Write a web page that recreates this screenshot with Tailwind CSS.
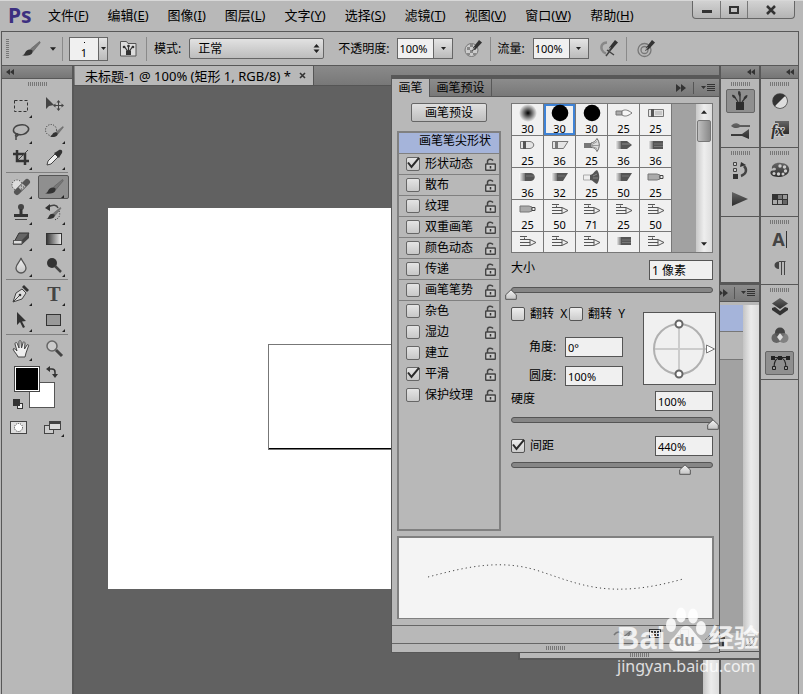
<!DOCTYPE html>
<html lang="zh-CN">
<head>
  <meta charset="UTF-8" />
  <meta name="viewport" content="width=device-width, initial-scale=1.0"/>
  <title>未标题-1</title>
  <script src="https://cdn.jsdelivr.net/npm/@tailwindcss/browser@4"></script>
</head>
<body class="relative h-screen overflow-hidden flex flex-col bg-[#b8b8b8] text-black text-[12px] leading-4 font-['Noto_Sans','Noto_Sans_CJK_SC',sans-serif]">

  <!-- Shared icons -->
  <svg class="absolute w-0 h-0" aria-hidden="true">
    <defs>
      <linearGradient id="dark" x1="0" y1="0" x2="0" y2="1"><stop offset="0" stop-color="#666"/><stop offset="1" stop-color="#2c2c2c"/></linearGradient>
      <linearGradient id="light" x1="0" y1="0" x2="0" y2="1"><stop offset="0" stop-color="#f4f4f4"/><stop offset="1" stop-color="#c4c4c4"/></linearGradient>
      <linearGradient id="fade"><stop offset="0" stop-color="#333"/><stop offset="1" stop-color="#eee"/></linearGradient>
      <linearGradient id="ferrule"><stop offset="0" stop-color="#fff"/><stop offset="1" stop-color="#777"/></linearGradient>
      <radialGradient id="soft"><stop offset="0" stop-color="#000"/><stop offset=".5" stop-color="#000" stop-opacity=".5"/><stop offset="1" stop-color="#000" stop-opacity="0"/></radialGradient>
    </defs>
    <symbol id="i-down" viewBox="0 0 7 4"><path d="M0 0h7L3.500 4z" fill="#222"/></symbol>
    <symbol id="i-left" viewBox="0 0 8 6"><path d="M4 0v6L0 3zM8 0v6L4 3z" fill="#333"/></symbol>
    <symbol id="i-right" viewBox="0 0 10 8"><path d="M0 0v8l5-4zM5 0v8l5-4z" fill="#333"/></symbol>
    <symbol id="i-menu" viewBox="0 0 14 8"><path d="M0 2h5L2.500 5z" fill="#333"/><path d="M6 .5h8M6 2.500h8M6 4.500h8M6 6.500h8" stroke="#333"/></symbol>
    <symbol id="i-brush" viewBox="0 0 20 16"><path d="M18.500.5c.8.6.8 1 .3 1.800L12 10.500 9.500 8z" fill="#777" stroke="#555" stroke-width=".5"/><path d="M9.500 8.500c2 .3 2.600 1.500 2 3-1 2.800-5 3.500-10.500 3 2-.5 2.500-1.500 3.500-3.500 1-1.800 3-3 5-2.500z" fill="#333"/></symbol>
    <symbol id="i-pen" viewBox="0 0 11 12"><path d="M8 0l3 2.500L5 9 1 11l1.500-4z" fill="#333"/><path d="M3.500 7.500L1.500 10" stroke="#ddd" stroke-width=".7"/></symbol>
    <symbol id="i-lock" viewBox="0 0 11 13"><path d="M2.500 6V3.500C2.500 1 6.500.5 8 2.500" fill="none" stroke="#444" stroke-width="1.500"/><rect x=".7" y="6" width="9.600" height="6.300" rx=".5" fill="#c8c8c8" stroke="#444" stroke-width="1.400"/><path d="M5.500 8v2.500" stroke="#333" stroke-width="1.500"/></symbol>
    <symbol id="i-tick" viewBox="0 0 14 13"><path d="M2 5.500l3.500 4.500L13 .8" fill="none" stroke="#2a2a2a" stroke-width="2"/></symbol>
    <symbol id="i-thumb" viewBox="0 0 12 11"><path d="M6 .8l5.300 5v4.500H.7V5.800z" fill="url(#light)" stroke="#555"/></symbol>
    <symbol id="i-corner" viewBox="0 0 3 3"><path d="M3 0v3H0z" fill="#222"/></symbol>
    <symbol id="i-grip" viewBox="0 0 19 4"><path d="M.5 0v4M2.500 0v4M4.500 0v4M6.500 0v4M8.500 0v4M10.500 0v4M12.500 0v4M14.500 0v4M16.500 0v4M18.500 0v4" stroke="#777"/></symbol>
    <!-- Brush tips -->
    <symbol id="b-soft" viewBox="0 0 18 18"><circle cx="9" cy="9" r="9" fill="url(#soft)"/></symbol>
    <symbol id="b-hard" viewBox="0 0 18 18"><circle cx="9" cy="9" r="8.300"/></symbol>
    <symbol id="b-point" viewBox="0 0 18 18"><path d="M1 7h6v4H1z" fill="#aaa" stroke="#777"/><path d="M7 7c3-2 6-1 10 2-4 3-7 4-10 2z" fill="#f5f5f5" stroke="#777"/></symbol>
    <symbol id="b-flat" viewBox="0 0 18 18"><path d="M1.500 5.500h15v7h-15z" fill="#e4e4e4" stroke="#777"/><path d="M4 5h3v8H4z" fill="#555"/><path d="M8 8h7M8 10h7" stroke="#aaa"/></symbol>
    <symbol id="b-round" viewBox="0 0 18 18"><path d="M1.500 5.500H11c5 1 5 6 0 7H1.500z" fill="#e4e4e4" stroke="#777"/><path d="M4 5h3v8H4z" fill="#555"/></symbol>
    <symbol id="b-slant" viewBox="0 0 18 18"><path d="M1.500 5.500H17l-4.500 7h-11z" fill="#e4e4e4" stroke="#777"/><path d="M4 5h3v8H4z" fill="#777"/></symbol>
    <symbol id="b-fan" viewBox="0 0 18 18"><path d="M1 7h7v5H1z" fill="#777"/><path d="M8 7c4-1 5-3 6-4.500 3 4 3 9 0 13-1-2-2-4-6-4z" fill="#ddd" stroke="#666"/><path d="M9 8.500l5-3M9 9.500h7M9 10.500l5 2" stroke="#999"/></symbol>
    <symbol id="b-point-d" viewBox="0 0 18 18"><path d="M0 5h6v8H0z" fill="url(#ferrule)"/><path d="M6 5h6l5 4-5 4H6z" fill="#555"/><path d="M7 8h8" stroke="#888"/></symbol>
    <symbol id="b-flat-d" viewBox="0 0 18 18"><path d="M1 5h5v8H1z" fill="url(#ferrule)"/><path d="M6 5h10v8H6z" fill="#555"/><path d="M7 8h9M7 10.500h9" stroke="#777"/></symbol>
    <symbol id="b-round-d" viewBox="0 0 18 18"><path d="M0 5h6v8H0z" fill="url(#ferrule)"/><path d="M6 5h6c5 1 5 7 0 8H6z" fill="#555"/><path d="M7 8h8" stroke="#777"/></symbol>
    <symbol id="b-slant-d" viewBox="0 0 18 18"><path d="M0 5h6v8H0z" fill="url(#ferrule)"/><path d="M6 5h11l-5 8H6z" fill="#555"/><path d="M7 8h7" stroke="#777"/></symbol>
    <symbol id="b-fan-d" viewBox="0 0 18 18"><path d="M.5 7h7v5h-7z" fill="#eee" stroke="#aaa"/><path d="M7 7c3 0 4-4 7-5 3 4 3 10 0 14-3-1-4-4-7-4z" fill="#555"/><path d="M10 8l4-2M10 10h5" stroke="#888"/></symbol>
    <symbol id="b-marker" viewBox="0 0 18 18"><path d="M1 6h9l3 1v4l-3 1H1z" fill="#aaa" stroke="#777"/><path d="M13 7.500h3v3h-3z" fill="#eee" stroke="#444"/></symbol>
    <symbol id="b-air" viewBox="0 0 18 18"><path d="M1 7.500h10l6 3-6 3H1M11 8v5M1 10.500h10M5.500 7V5.500M1 4.500h7" fill="none" stroke="#555"/></symbol>
  </svg>

  <!-- Title and menu bar -->
  <header class="h-[31px] shrink-0 flex items-start justify-between px-2 border-t border-[#d8d8d8]">
    <div class="flex items-center h-[28px]">
      <span class="w-10 text-[21px] leading-6 font-bold text-[#3c2f80]">Ps</span>
      <nav class="flex gap-[19px] text-[13px] leading-5 whitespace-nowrap">
        <button>文件(<u>F</u>)</button>
        <button>编辑(<u>E</u>)</button>
        <button>图像(<u>I</u>)</button>
        <button>图层(<u>L</u>)</button>
        <button>文字(<u>Y</u>)</button>
        <button>选择(<u>S</u>)</button>
        <button>滤镜(<u>T</u>)</button>
        <button>视图(<u>V</u>)</button>
        <button>窗口(<u>W</u>)</button>
        <button>帮助(<u>H</u>)</button>
      </nav>
    </div>
    <div class="flex h-[18px] border border-t-0 border-[#666] rounded-b bg-linear-to-b from-[#d2d2d2] to-[#b4b4b4]">
      <button aria-label="最小化" class="w-[28px] flex justify-center items-center border-r border-[#777]"><svg class="w-3 h-3"><rect x="1" y="6" width="10" height="3" fill="#333"/></svg></button>
      <button aria-label="最大化" class="w-[27px] flex justify-center items-center border-r border-[#777]"><svg class="w-3 h-3"><rect x="2" y="3" width="8" height="6" fill="none" stroke="#333" stroke-width="2"/></svg></button>
      <button aria-label="关闭" class="w-[46px] flex justify-center items-center"><svg class="w-3 h-3"><path d="M2 2l8 8M10 2l-8 8" stroke="#333" stroke-width="2.500"/></svg></button>
    </div>
  </header>

  <!-- Options bar -->
  <section class="h-[35px] shrink-0 ml-px mr-1 flex items-center border border-[#585858] pl-1 whitespace-nowrap">
    <svg class="w-[3px] h-5 mr-3"><path d="M0 .5h3M0 2.500h3M0 4.500h3M0 6.500h3M0 8.500h3M0 10.500h3M0 12.500h3M0 14.500h3M0 16.500h3M0 18.500h3" stroke="#777"/></svg>
    <button aria-label="画笔工具" class="flex items-center gap-[9px]">
      <svg class="w-5 h-4"><use href="#i-brush"/></svg>
      <svg class="w-[6px] h-1"><use href="#i-down"/></svg>
    </button>
    <div class="w-px h-6 bg-[#8a8a8a] mx-[6px]"></div>
    <button aria-label="画笔大小" class="flex w-[39px] h-6 border border-[#666] text-[11px]">
      <span class="w-7 shrink-0 bg-[#f0f0f0] h-full flex flex-col items-center justify-between pt-1"><i class="block size-px bg-black"></i><span class="leading-3 pb-px">1</span></span>
      <span class="flex-1 h-full border-l border-[#666] bg-linear-to-b from-[#e4e4e4] to-[#bbb] flex items-center justify-center"><svg class="w-[5px] h-[3px]"><use href="#i-down"/></svg></span>
    </button>
    <button aria-label="切换画笔面板" class="mx-3">
      <svg class="w-[17px] h-[17px]"><path d="M.5 1.500h6l1.500 2h8v12.500H.5z" fill="#ddd" stroke="#555"/><path d="M6 10.500h5V15H6z" fill="#333"/><path d="M8.500 11V5M7.500 11L4 6M9.500 11L13 6" stroke="#333" stroke-width="1.200"/><circle cx="4" cy="7" r="1.300" fill="#333"/><circle cx="13" cy="7" r="1.300" fill="#333"/><circle cx="8.500" cy="6" r="1.300" fill="#333"/></svg>
    </button>
    <div class="w-px h-6 bg-[#8a8a8a] -ml-[3px] mr-[7px]"></div>
    <label for="mode">模式:</label>
    <div class="relative ml-2 mr-[14px]">
      <select id="mode" class="block appearance-none w-[135px] h-[21px] pl-2 border border-[#666] rounded-[2px] bg-linear-to-b from-[#e2e2e2] to-[#bdbdbd] text-[12px] leading-4"><option>正常</option></select>
      <svg class="absolute right-1 top-[6px] w-[7px] h-[9px] pointer-events-none"><path d="M.5 3.500h6L3.500 0zM.5 5.500h6L3.500 9z" fill="#222"/></svg>
    </div>
    <label for="opacity">不透明度:</label>
    <div class="flex h-[21px] ml-2 border border-[#666]">
      <input id="opacity" value="100%" class="w-[35px] px-px bg-[#f0f0f0] text-[11px]"/>
      <button aria-label="不透明度选项" class="w-[19px] border-l border-[#666] bg-linear-to-b from-[#e4e4e4] to-[#bbb] flex items-center justify-center"><svg class="w-[5px] h-[3px]"><use href="#i-down"/></svg></button>
    </div>
    <button aria-label="不透明度压力" class="ml-[11px]">
      <svg class="w-[18px] h-[18px]"><circle cx="7.500" cy="10" r="6.500" fill="#ccc" stroke="#777"/><path d="M3 7h3v3H3zM6 4h3v3H6zM9 7h3v3H9zM6 10h3v3H6zM3 13h3v2H3zM9 13h3v2H9z" fill="#888"/><use href="#i-pen" x="7" y="0" width="11" height="12"/></svg>
    </button>
    <div class="w-px h-6 bg-[#8a8a8a] ml-2 mr-[6px]"></div>
    <label for="flow">流量:</label>
    <div class="flex h-[21px] ml-2 border border-[#666]">
      <input id="flow" value="100%" class="w-[35px] px-px bg-[#f0f0f0] text-[11px]"/>
      <button aria-label="流量选项" class="w-[19px] border-l border-[#666] bg-linear-to-b from-[#e4e4e4] to-[#bbb] flex items-center justify-center"><svg class="w-[5px] h-[3px]"><use href="#i-down"/></svg></button>
    </div>
    <button aria-label="喷枪" class="ml-[11px]">
      <svg class="w-[18px] h-[18px]"><path d="M7 2.500c-5 0-6.500 4-5 7.500 1 2 2 3 4 3.500" fill="none" stroke="#888" stroke-width="2.500"/><path d="M6 16l9-12M7 10l7 5" stroke="#444" stroke-width="1.500"/><use href="#i-pen" x="7" y="0" width="11" height="12"/></svg>
    </button>
    <div class="w-px h-6 bg-[#8a8a8a] ml-2 mr-[10px]"></div>
    <button aria-label="大小压力">
      <svg class="w-[18px] h-[18px]"><circle cx="7.500" cy="10" r="6.500" fill="none" stroke="#777" stroke-width="1.300"/><circle cx="7.500" cy="10" r="3.500" fill="none" stroke="#777" stroke-width="1.300"/><use href="#i-pen" x="7" y="0" width="11" height="12"/></svg>
    </button>
  </section>

  <main class="flex-1 min-h-0 ml-px mr-1 flex border-x border-[#585858]">
    <!-- Toolbox -->
    <aside class="w-[72px] shrink-0 border-r-2 border-[#585858]">
      <div class="h-[13px] flex items-center pl-1 border-b border-[#585858] bg-linear-to-b from-[#8c8c8c] to-[#767676]"><svg class="w-2 h-[6px]"><use href="#i-left"/></svg></div>
      <svg class="w-[19px] h-1 mt-[3px] mx-auto"><use href="#i-grip"/></svg>
      <div id="tools" class="px-[3px] pt-2"></div>

      <!-- Colour swatches -->
      <div class="relative h-[46px] mt-[5px] mx-3">
        <button aria-label="背景色" class="absolute left-[15px] top-4 size-[26px] bg-white border border-[#555]"></button>
        <button aria-label="前景色" class="absolute left-0 top-0 size-[26px] bg-black border border-[#444] ring-1 ring-inset ring-white"></button>
        <button aria-label="切换颜色" class="absolute left-8 top-0"><svg class="w-3 h-3"><path d="M3 3h3c2 0 3 1 3 3v3" fill="none" stroke="#333" stroke-width="1.500"/><path d="M0 3l4-3v6zM6 8h6l-3 4z" fill="#333"/></svg></button>
        <button aria-label="默认颜色" class="absolute -left-[1px] top-[33px]"><svg class="w-[11px] h-[11px]"><rect x="4.500" y="4.500" width="5" height="5" fill="#eee" stroke="#333"/><rect width="7" height="7" fill="#333"/></svg></button>
      </div>
      <div class="flex justify-between items-center px-2 pt-[7px]">
        <button aria-label="快速蒙版"><svg class="w-[18px] h-[14px]"><rect x=".5" y=".5" width="16" height="12" fill="#ddd" stroke="#444"/><circle cx="8.500" cy="6.500" r="4" fill="#fff" stroke="#333" stroke-dasharray="1 1"/></svg></button>
        <button aria-label="屏幕模式"><svg class="w-5 h-[18px]"><rect x=".5" y="6.500" width="9" height="8" fill="#ccc" stroke="#444"/><rect x="5.500" y="2.500" width="11" height="8" fill="#ddd" stroke="#444"/><path d="M5 4h12" stroke="#444" stroke-width="2"/><path d="M20 15v3h-3z" fill="#222"/></svg></button>
      </div>
    </aside>

    <!-- Document -->
    <section class="flex-1 min-w-0 flex flex-col bg-[#616161] border-r-2 border-[#585858]">
      <div class="h-[20px] shrink-0 border-b border-[#555] bg-linear-to-b from-[#8a8a8a] to-[#787878] flex pl-px">
        <div class="flex items-center justify-between w-[239px] pl-[10px] pr-[7px] bg-[#b8b8b8] border-r border-[#555] whitespace-nowrap">
          <span class="text-[13px] leading-5">未标题-1 @ 100% (矩形 1, RGB/8) *</span>
          <button aria-label="关闭文档"><svg class="w-[7px] h-[7px]"><path d="M1 1l5 5M6 1L1 6" stroke="#333" stroke-width="1.600"/></svg></button>
        </div>
      </div>
      <div class="flex-1 min-h-0 flex justify-between overflow-hidden">
        <div class="w-[500px] h-[381px] ml-[34px] mt-[122px] pl-40 pt-[136px] bg-white">
          <div class="w-[200px] h-[106px] border border-[#777]">
            <div class="h-full border-b border-black"></div>
          </div>
        </div>
        <div class="w-4 bg-linear-to-r from-[#c4c4c4] via-[#ececec] to-[#dcdcdc]"></div>
      </div>
    </section>

    <!-- Collapsed panels -->
    <aside class="w-[40px] shrink-0 border-r-2 border-[#585858]">
      <div class="h-[13px] flex items-center justify-end pr-1 border-b border-[#585858] bg-linear-to-b from-[#8c8c8c] to-[#767676]"><svg class="w-2 h-[6px]"><use href="#i-left"/></svg></div>
      <div class="flex flex-col items-center pt-[3px] pb-[5px] border-b border-[#585858]">
        <svg class="w-[19px] h-1 mb-[3px]"><use href="#i-grip"/></svg>
        <button aria-label="画笔" class="w-[29px] h-6 mb-[5px] flex items-center justify-center rounded-[2px] border border-[#666] bg-[#8f8f8f]"><svg class="w-4 h-5"><path d="M4 11h8v8H4z" fill="#2c2c2c"/><path d="M6 11L2 5M8 11V3M10 11l4-5" stroke="#333" stroke-width="1.300"/><path d="M0 4c1-1 3 0 4 3-2 1-4-1-4-3zM6.500 0c2 0 3 2 1.500 6-2-2-2.500-4-1.500-6zM15.500 4c0 3-2 4-4 4 0-2 2-4 4-4z" fill="#333"/></svg></button>
        <button aria-label="画笔预设" class="w-[29px] h-6 flex items-center justify-center"><svg class="w-[19px] h-[17px]"><path d="M0 4c2-3 6-4 9-1h10v2H9C6 7 2 6 0 4zM0 12h11l7-5v10l-7-3H0z" fill="url(#dark)"/></svg></button>
      </div>
      <div class="flex flex-col items-center pt-[3px] pb-[5px] border-b border-[#585858]">
        <svg class="w-[19px] h-1 mb-[3px]"><use href="#i-grip"/></svg>
        <button aria-label="历史记录" class="w-[29px] h-6 mb-[5px] flex items-center justify-center"><svg class="w-4 h-[18px]"><path d="M1.500 1.500h3v3h-3zM1.500 7.500h3v3h-3z" fill="#ccc" stroke="#444"/><path d="M1 13h5v5H1z" fill="#333"/><path d="M9 15c6-2 6-7 3-10" fill="none" stroke="#444" stroke-width="2.500"/><path d="M8 6l1-5 5 3z" fill="#333"/></svg></button>
        <button aria-label="动作" class="w-[29px] h-6 flex items-center justify-center"><svg class="w-4 h-[14px]"><path d="M0 0l16 7-16 7z" fill="url(#dark)"/></svg></button>
      </div>
    </aside>
    <aside class="w-[37px] shrink-0">
      <div class="h-[13px] flex items-center justify-end pr-1 border-b border-[#585858] bg-linear-to-b from-[#8c8c8c] to-[#767676]"><svg class="w-2 h-[6px]"><use href="#i-left"/></svg></div>
      <div class="flex flex-col items-center pt-[3px] pb-[5px] border-b border-[#585858]">
        <svg class="w-[19px] h-1 mb-[3px]"><use href="#i-grip"/></svg>
        <button aria-label="调整" class="w-[29px] h-6 mb-[5px] flex items-center justify-center"><svg class="w-[18px] h-[18px]"><circle cx="9" cy="9" r="7" fill="#ccc" stroke="#444" stroke-width="1.600"/><path d="M14 4L4 14A7 7 0 0014 4z" fill="#ddd"/><path d="M14 4L4 14A7 7 0 0114 4z" fill="#333"/></svg></button>
        <button aria-label="样式" class="w-[29px] h-6 flex items-center justify-center"><svg class="w-[18px] h-[18px]"><path d="M4 0h14v13H4z" fill="url(#dark)"/><text x="0" y="15" font-family="Liberation Serif" font-style="italic" font-weight="bold" font-size="16" fill="#333" stroke="#ccc" stroke-width="2" paint-order="stroke">fx</text></svg></button>
      </div>
      <div class="flex flex-col items-center pt-[3px] pb-[5px] border-b border-[#585858]">
        <svg class="w-[19px] h-1 mb-[3px]"><use href="#i-grip"/></svg>
        <button aria-label="颜色" class="w-[29px] h-6 mb-[5px] flex items-center justify-center"><svg class="w-5 h-4"><path d="M2 7C1 3 6 0 11 1c6 0 9 4 8 8s-6 6-11 6C2 15-1 12 1 9c2-1 5 0 5-2-1-2-3-1-4 0z" fill="url(#dark)"/><g fill="#ccc"><circle cx="10" cy="4" r="1.700"/><circle cx="14.500" cy="5" r="1.700"/><circle cx="15.500" cy="9" r="1.700"/><circle cx="4" cy="11.500" r="1.500"/><circle cx="8.500" cy="12" r="1.700"/><circle cx="13" cy="12" r="1.500"/></g></svg></button>
        <button aria-label="色板" class="w-[29px] h-6 flex items-center justify-center"><svg class="w-4 h-[11px]"><path d="M0 0h16v11H0z" fill="#333"/><path d="M6 1h4v4H6z" fill="#777"/><path d="M11 1h4v4h-4z" fill="#999"/><path d="M1 6h4v4H1zM6 6h4v4H6z" fill="#aaa"/><path d="M11 6h4v4h-4z" fill="#666"/></svg></button>
      </div>
      <div class="flex flex-col items-center pt-[3px] pb-1 border-b border-[#585858]">
        <svg class="w-[19px] h-1 mb-[3px]"><use href="#i-grip"/></svg>
        <button aria-label="字符" class="w-[29px] h-6 mb-[5px] flex items-center justify-center gap-px text-[18px] font-bold text-[#444]">A<i class="block w-px h-[17px] bg-[#333]"></i></button>
        <button aria-label="段落" class="w-[29px] h-6 flex items-center justify-center"><svg class="w-3 h-[14px]"><path d="M11 .5H5C-1 .5-1 8 5 8V.5" fill="#444"/><path d="M5 .5h6.500M7.500 0v14M10.500 0v14" stroke="#444"/></svg></button>
      </div>
      <div class="flex flex-col items-center pt-[3px] pb-1 border-b border-[#585858]">
        <svg class="w-[19px] h-1 mb-[3px]"><use href="#i-grip"/></svg>
        <button aria-label="图层" class="w-[29px] h-6 mb-1 flex items-center justify-center"><svg class="w-[18px] h-[18px]"><path d="M1 10l3-1 5 4 5-4 3 1v2l-8 5.500L1 12z" fill="#333"/><path d="M9 0l8 5.500L9 11 1 5.500z" fill="url(#dark)"/></svg></button>
        <button aria-label="通道" class="w-[29px] h-6 mb-1 flex items-center justify-center"><svg class="w-[18px] h-[17px]"><circle cx="9" cy="5.500" r="5" fill="#444"/><circle cx="5.500" cy="11" r="5" fill="#555" opacity=".85"/><circle cx="12.500" cy="11" r="5" fill="#777" opacity=".85"/><path d="M9 6l3 4-3 4-3-4z" fill="#ddd"/></svg></button>
        <button aria-label="路径" class="w-[29px] h-6 flex items-center justify-center rounded-[2px] border border-[#666] bg-[#8f8f8f]"><svg class="w-5 h-4"><path d="M2 2.500h16M4 13c0-7 2-10 6-10s6 3 6 10" fill="none" stroke="#222" stroke-width="1.200"/><path d="M1 1h4v4H1zM8 1h4v4H8zM16 1h4v4h-4z" fill="#222"/><path d="M2.500 11.500h3v3h-3zM14.500 11.500h3v3h-3z" fill="#999" stroke="#222"/></svg></button>
      </div>
    </aside>
  </main>

  <!-- Panel behind the brush panel -->
  <section class="absolute top-[282px] right-[42px] w-[243px] h-[378px] flex flex-col border-2 border-t-[3px] border-[#585858] bg-[#b8b8b8]">
    <div class="h-[17px] flex items-center justify-end pr-1 gap-[6px] border-b border-[#555] bg-linear-to-b from-[#8c8c8c] to-[#787878]">
      <svg class="w-[10px] h-2"><use href="#i-right"/></svg>
      <i class="block w-px h-3 bg-[#555]"></i>
      <svg class="w-[14px] h-2"><use href="#i-menu"/></svg>
    </div>
    <div class="flex flex-1 mt-[3px] bg-[#a2a2a2]">
      <div class="flex-1">
        <div class="h-[27px] bg-[#a5b4da] border-b border-[#777]"></div>
        <div class="h-7 bg-[#b8b8b8] border-b border-[#777]"></div>
      </div>
      <div class="w-4 bg-linear-to-r from-[#c4c4c4] via-[#ececec] to-[#dcdcdc]"></div>
    </div>
    <div class="h-[19px] flex items-center justify-end pr-1 gap-5 border-b border-[#555]">
      <svg class="w-3 h-3"><path d="M0 2h12M4 1h4" stroke="#222" stroke-width="1.500"/><path d="M1 3h10v8H1z" fill="#333"/><path d="M4 4v6M8 4v6" stroke="#bbb"/></svg>
      <svg class="w-[10px] h-[10px]"><path d="M0 10L10 0M4 10l6-6M8 10l2-2" stroke="#555" stroke-dasharray="1 1"/></svg>
    </div>
    <svg class="w-[19px] h-1 my-px mx-auto"><use href="#i-grip"/></svg>
  </section>

  <!-- Brush panel -->
  <section class="absolute top-[75px] right-[83px] w-[329px] h-[578px] flex flex-col bg-[#b8b8b8] border border-t-4 border-[#585858]">
    <div class="h-[18px] shrink-0 flex border-b border-[#585858] bg-linear-to-b from-[#8c8c8c] to-[#787878]">
      <button class="w-[38px] h-[18px] bg-[#b8b8b8] border-r border-[#585858]">画笔</button>
      <button class="w-[62px] border-r border-[#585858]">画笔预设</button>
      <div class="flex-1 flex items-center justify-end pr-1 gap-[7px]">
        <svg class="w-[10px] h-2"><use href="#i-right"/></svg>
        <i class="block w-px h-3 bg-[#555]"></i>
        <svg class="w-[14px] h-2"><use href="#i-menu"/></svg>
      </div>
    </div>

    <div class="flex pl-[5px] pt-[6px]">
      <div class="w-[104px]">
        <button class="block w-[76px] h-[19px] ml-[14px] border border-[#666] rounded-[2px] bg-linear-to-b from-[#e0e0e0] to-[#bfbfbf] leading-4">画笔预设</button>
        <div class="mt-[9px] h-[400px] border-2 border-[#808080]">
          <button class="block w-full h-[21px] pl-3 bg-[#a5b4da] border-b border-[#808080] leading-3 pb-1">画笔笔尖形状</button>
          <ul id="options"></ul>
        </div>
      </div>

      <div class="w-[205px] ml-[10px]">
        <!-- Brush tips -->
        <div class="w-[202px] h-[150px] flex justify-between border border-[#777] bg-[#a2a2a2] overflow-hidden">
          <div id="tips" class="w-[160px] grid grid-cols-5 auto-rows-[32px]"></div>
          <div class="w-4 flex flex-col items-center bg-linear-to-r from-[#c8c8c8] via-[#eee] to-[#ddd]">
            <svg class="w-[6px] h-1 my-[6px] rotate-180"><use href="#i-down"/></svg>
            <div class="w-[14px] h-[22px] rounded-[2px] border border-[#777] bg-linear-to-r from-[#c0c0c0] to-[#8a8a8a]"></div>
            <svg class="w-[6px] h-1 mt-auto mb-[6px]"><use href="#i-down"/></svg>
          </div>
        </div>

        <div class="w-[202px] mt-[7px] flex justify-between h-5">
          <label for="size">大小</label>
          <input id="size" value="1 像素" class="w-[64px] h-5 px-[2px] border border-[#555] bg-[#f0f0f0] text-[12px]"/>
        </div>
        <div class="relative w-[202px] h-3 mt-[7px]">
          <input type="range" aria-label="大小" value="0" class="block appearance-none w-full h-[6px] rounded-full border border-[#555] bg-[#868686] [&::-webkit-slider-thumb]:opacity-0"/>
          <svg class="absolute -left-[6px] top-[2px] w-3 h-[11px] pointer-events-none"><use href="#i-thumb"/></svg>
        </div>

        <div class="flex mt-1">
          <div class="w-[132px]">
            <div class="flex items-center h-[22px]">
              <span class="relative"><input id="flipx" type="checkbox" class="block appearance-none size-[14px] rounded-[2px] border border-[#555] bg-linear-to-b from-[#eee] to-[#ccc]"/></span>
              <label for="flipx" class="pl-[5px] w-[44px] whitespace-nowrap">翻转&nbsp; X</label>
              <span class="relative"><input id="flipy" type="checkbox" class="block appearance-none size-[14px] rounded-[2px] border border-[#555] bg-linear-to-b from-[#eee] to-[#ccc]"/></span>
              <label for="flipy" class="pl-[5px] whitespace-nowrap">翻转&nbsp; Y</label>
            </div>
            <div class="flex items-center mt-3 pl-[18px]">
              <label for="angle" class="w-9">角度:</label>
              <input id="angle" value="0°" class="w-[58px] h-5 px-[2px] border border-[#555] bg-[#f0f0f0] text-[11px]"/>
            </div>
            <div class="flex items-center mt-[9px] pl-[18px]">
              <label for="round" class="w-9">圆度:</label>
              <input id="round" value="100%" class="w-[58px] h-5 px-[2px] border border-[#555] bg-[#f0f0f0] text-[11px]"/>
            </div>
          </div>
          <svg class="w-[73px] h-[73px] mt-[9px]"><rect x=".5" y=".5" width="72" height="72" fill="#f0f0f0" stroke="#555"/><path d="M11 37h56M36 12v50" stroke="#ccc" stroke-width="2"/><circle cx="36" cy="37" r="25" fill="none" stroke="#b0b0b0" stroke-width="2"/><circle cx="36" cy="12" r="3.500" fill="#fff" stroke="#666" stroke-width="2"/><circle cx="36" cy="62" r="3.500" fill="#fff" stroke="#666" stroke-width="2"/><path d="M63.500 33v8l8-4z" fill="#fff" stroke="#777"/></svg>
        </div>

        <div class="w-[202px] mt-[5px] flex justify-between h-5">
          <label for="hard">硬度</label>
          <input id="hard" value="100%" class="w-[58px] h-5 px-[2px] border border-[#555] bg-[#f0f0f0] text-[11px]"/>
        </div>
        <div class="relative w-[202px] h-3 mt-[6px]">
          <input type="range" aria-label="硬度" value="100" class="block appearance-none w-full h-[6px] rounded-full border border-[#555] bg-[#868686] [&::-webkit-slider-thumb]:opacity-0"/>
          <svg class="absolute -right-[6px] top-[2px] w-3 h-[11px] pointer-events-none"><use href="#i-thumb"/></svg>
        </div>

        <div class="w-[202px] mt-[7px] flex items-center h-5">
          <span class="relative"><input id="gap" type="checkbox" checked class="peer block appearance-none size-[14px] rounded-[2px] border border-[#555] bg-linear-to-b from-[#eee] to-[#ccc]"/><svg class="absolute left-0 top-0 w-[14px] h-[13px] pointer-events-none hidden peer-checked:block"><use href="#i-tick"/></svg></span>
          <label for="gap" class="pl-[5px] flex-1">间距</label>
          <input aria-label="间距" value="440%" class="w-[58px] h-5 px-[2px] border border-[#555] bg-[#f0f0f0] text-[11px]"/>
        </div>
        <div class="relative w-[202px] h-3 mt-[6px]">
          <input type="range" aria-label="间距值" min="1" max="1000" value="440" class="block appearance-none w-full h-[6px] rounded-full border border-[#555] bg-[#868686] [&::-webkit-slider-thumb]:opacity-0"/>
          <svg class="absolute left-[168px] top-[2px] w-3 h-[11px] pointer-events-none"><use href="#i-thumb"/></svg>
        </div>
      </div>
    </div>

    <!-- Stroke preview -->
    <div class="mt-[5px] mx-[5px] h-[83px] border-2 border-b-1 border-[#808080] bg-[#f4f4f4]">
      <svg class="w-full h-full" viewBox="0 0 313 80"><path d="M29 39C64 30 100 20 140 33S210 62 284 41" fill="none" stroke="#444" stroke-dasharray="1.200 3.100"/></svg>
    </div>
    <div class="mt-[6px] h-[19px] flex items-center justify-end pr-1 gap-4 border-y border-[#666]">
      <svg class="w-5 h-[10px]"><path d="M1 5c3-4 6-4 9 0M8 9l10-8M10 9c3 0 5-2 7-6" fill="none" stroke="#777" stroke-width="1.500"/></svg>
      <svg class="w-3 h-3"><rect x=".5" y=".5" width="11" height="8" fill="#ddd" stroke="#333"/><path d="M2 3h8M2 6h8" stroke="#333" stroke-width="2" stroke-dasharray="2 1"/></svg>
      <svg class="w-3 h-3"><path d="M3.500.5h8v11h-8z" fill="none" stroke="#777"/><path d="M0 6h6v6z" fill="#333"/></svg>
      <svg class="w-[10px] h-[10px]"><path d="M0 10L10 0M4 10l6-6M8 10l2-2" stroke="#555" stroke-dasharray="1 1"/></svg>
    </div>
    <svg class="w-[19px] h-1 mt-[2px] mx-auto"><use href="#i-grip"/></svg>
  </section>

  <!-- Watermark -->
  <div class="absolute right-[44px] top-[606px] w-[142px] text-white/80 pointer-events-none">
    <div class="relative h-[50px] flex items-end justify-between font-bold whitespace-nowrap">
      <span class="text-[31px] leading-[34px] font-['Liberation_Sans']">Bai</span>
      <svg class="absolute left-[48px] top-0 w-[42px] h-[46px]" fill="#fff" fill-opacity=".85"><ellipse cx="6" cy="19" rx="5" ry="7"/><ellipse cx="16" cy="9" rx="5" ry="7.500"/><ellipse cx="28" cy="10" rx="5" ry="7.500"/><ellipse cx="36" cy="22" rx="5" ry="7"/><path d="M21 20c6 0 8 8 14 13 5 5 2 12-4 12H11C4 45 2 38 7 33c6-5 8-13 14-13z"/></svg>
      <span class="absolute left-[57px] top-[25px] text-[17px] leading-5 text-[#999] font-['Liberation_Sans']">du</span>
      <span class="text-[25px] leading-[38px]">经验</span>
    </div>
    <div class="text-[16px] leading-5 whitespace-nowrap">jingyan.baidu.com</div>
  </div>

  <script>
    // null starts a new group of tools
    const tools = [
      ['矩形选框', '<rect x="3.500" y="4.500" width="13" height="11" fill="none" stroke="#333" stroke-dasharray="3 2"/>'],
      ['移动', '<path d="M2 1v12l3-3 5-1z" fill="#444"/><path d="M14.500 5v9M10 9.500h9" stroke="#444"/><path d="M12.500 6.500h4l-2-2.500zM12.500 12.500h4l-2 2.500zM11.500 7.500v4L9 9.500zM17.500 7.500v4l2.500-2z" fill="#444"/>', true],
      ['套索', '<path d="M6 12C0 10 2 4 9 3s10 3 8 6-7 5-11 3c-2 0-2 3 0 2s1-3-1-2M5 14v4" fill="none" stroke="#444" stroke-width="1.500"/>'],
      ['快速选择', '<circle cx="7" cy="8" r="5.500" fill="none" stroke="#333" stroke-dasharray="1 1.500"/><use href="#i-brush" x="5" y="3" width="15" height="14"/>'],
      ['裁剪', '<path d="M2 6h12v11M6 2v11h12" fill="none" stroke="#333" stroke-width="2.500"/><path d="M7 12l10-10" stroke="#444"/>'],
      ['吸管', '<path d="M3 17l1-4 7-7 3 3-7 7z" fill="#eee" stroke="#444"/><path d="M10 5l5 5 1-2 2-3c1-3-1-4-3-3l-3 2z" fill="#333"/>'],
      null,
      ['污点修复', '<circle cx="6" cy="8" r="5" fill="#ddd" stroke="#333" stroke-dasharray="1 1.500"/><path d="M6 15L16 5" stroke="#555" stroke-width="6" stroke-linecap="round"/><path d="M9 12l4-4" stroke="#bbb" stroke-width="4.500"/><path d="M10 9h1M12 10h1M10 12h1" stroke="#444"/>'],
      ['画笔', '<use href="#i-brush" x="0" y="2" width="20" height="16"/>'],
      ['仿制图章', '<circle cx="10" cy="4" r="3" fill="#444"/><path d="M8.500 6h3v5H17v3H3v-3h5.500z" fill="#333"/><path d="M4 16.500h12" stroke="#444"/>'],
      ['历史记录画笔', '<path d="M4 4c5-3 9-2 10 1" fill="none" stroke="#444" stroke-width="1.500"/><path d="M1 5l5-4v7z" fill="#333"/><path d="M15 8c2 4 0 8-5 9" fill="none" stroke="#333" stroke-dasharray="1 1.500"/><use href="#i-brush" x="1" y="4" width="17" height="13"/>'],
      ['橡皮擦', '<path d="M8 4h10l-7 11H2z" fill="#666" stroke="#333"/><path d="M2 11l9 0 7-7v5l-7 6.500H2z" fill="#444"/><path d="M2.500 11.500H11V15H2.500z" fill="#ddd" stroke="#555"/>'],
      ['渐变', '<rect x="2.500" y="4.500" width="15" height="11" fill="url(#fade)" stroke="#333"/>'],
      ['模糊', '<path d="M10 3c1 4 5 6 5 10a5 5 0 01-10 0c0-4 4-6 5-10z" fill="url(#light)" stroke="#555" stroke-width="1.300"/>'],
      ['减淡', '<circle cx="8" cy="8" r="5" fill="#333"/><path d="M11 11l6 6" stroke="#444" stroke-width="2.500"/>'],
      null,
      ['钢笔', '<path d="M2 18l3-9 6-4 4 4-4 6z" fill="#ddd" stroke="#444"/><path d="M2 18l6-6" stroke="#444"/><circle cx="9" cy="11" r="1.300" fill="#333"/><path d="M11 3l5 5 2-2-5-5z" fill="#333"/>'],
      ['文字', '<text x="10" y="17" text-anchor="middle" font-family="Liberation Serif" font-weight="bold" font-size="20" fill="#444">T</text>'],
      ['路径选择', '<path d="M6 2v13l3-3 3 6 2-1-3-5.500 4-.5z" fill="#333"/>'],
      ['矩形', '<rect x="2.500" y="4.500" width="14" height="11" fill="#999" stroke="#333"/>'],
      null,
      ['抓手', '<path d="M7 18c-1-3-4-5-5-8 1-1 2 0 4 2L4 5c0-2 2-2 2.500 0L8 9V3c0-2 2-2 2 0l.5 6L12 4c0-2 2-1 2 0l-.5 6L16 6c1-1 2 0 1.500 1L15 14l-1 4z" fill="#eee" stroke="#444"/>'],
      ['缩放', '<circle cx="8" cy="7" r="5" fill="#ccc" stroke="#666" stroke-width="1.500"/><path d="M12 11l6 6" stroke="#444" stroke-width="3"/>', true],
    ];

    function renderTools() {
      let html = '<div class="grid grid-cols-2 gap-[2px]">';
      tools.forEach(tool => {
        if (!tool) {
          html += '</div><div class="h-px my-[2px] mx-px bg-[#808080]"></div><div class="grid grid-cols-2 gap-[2px]">';
          return;
        }
        const [name, icon, plain] = tool;
        html += `
          <button aria-label="${name}" class="relative h-6 flex items-center justify-center rounded-[2px] ${name === '画笔' ? 'border border-[#555] bg-[#8f8f8f]' : ''}">
            <svg class="w-5 h-5">${icon}</svg>
            ${plain ? '' : '<svg class="absolute right-1 bottom-0 w-[3px] h-[3px]"><use href="#i-corner"/></svg>'}
          </button>`;
      });
      document.getElementById('tools').innerHTML = html + '</div>';
    }

    const options = ['形状动态', '散布', '纹理', '双重画笔', '颜色动态', '传递', '画笔笔势', '杂色', '湿边', '建立', '平滑', '保护纹理'];
    const enabled = ['形状动态', '平滑'];

    function renderOptions() {
      document.getElementById('options').innerHTML = options.map((name, i) => `
        <li class="h-[21px] flex items-center pl-[7px] pr-[3px] border-b ${i < 7 ? 'border-[#808080]' : 'border-transparent'}">
          <span class="relative">
            <input id="opt${i}" type="checkbox" ${enabled.includes(name) ? 'checked' : ''} class="peer block appearance-none size-[14px] rounded-[2px] border border-[#666] bg-linear-to-b from-[#e4e4e4] to-[#c8c8c8]"/>
            <svg class="absolute left-0 top-0 w-[14px] h-[13px] pointer-events-none hidden peer-checked:block"><use href="#i-tick"/></svg>
          </span>
          <label for="opt${i}" class="flex-1 pl-[5px]">${name}</label>
          <svg class="w-[11px] h-[13px]"><use href="#i-lock"/></svg>
        </li>`).join('');
    }

    const tips = [
      ['soft', 30], ['hard', 30], ['hard', 30], ['point', 25], ['flat', 25],
      ['round', 25], ['slant', 36], ['fan', 25], ['point-d', 36], ['flat-d', 36],
      ['round-d', 36], ['slant-d', 32], ['fan-d', 25], ['slant-d', 50], ['marker', 25],
      ['marker', 25], ['air', 50], ['air', 71], ['air', 25], ['air', 50],
      ['air', ''], ['air', ''], ['air', ''], ['flat-d', ''], ['air', ''],
    ];

    function renderTips() {
      document.getElementById('tips').innerHTML = tips.map(([shape, size], i) => `
        <button class="flex flex-col items-center justify-between border-r border-b border-[#777] bg-[#f0f0f0] text-[11px] leading-[13px] ${i === 1 ? 'ring-2 ring-inset ring-[#3f83d6]' : ''}">
          <svg class="w-[18px] h-[18px]"><use href="#b-${shape}"/></svg>
          <span>${size}</span>
        </button>`).join('');
    }

    renderTools();
    renderOptions();
    renderTips();
  </script>
</body>
</html>
